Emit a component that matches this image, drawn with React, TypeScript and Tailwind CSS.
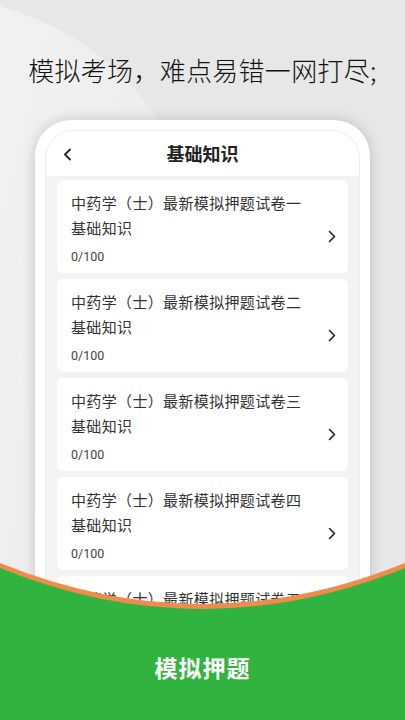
import React from "react";

const Chevron = ({ className = "" }: { className?: string }) => (
  <svg width="8" height="13" viewBox="0 0 8 13" className={className} fill="none">
    <path d="M1.5 1.5 L6.5 6.5 L1.5 11.5" stroke="#222" strokeWidth="1.6" strokeLinecap="round" strokeLinejoin="round" />
  </svg>
);

const items = ["一", "二", "三", "四", "五"];

export default function App() {
  return (
    <div
      className="relative h-[720px] w-[405px] overflow-hidden bg-[#e7e7e7]"
      style={{ fontFamily: '"Noto Sans CJK SC", "Noto Sans", sans-serif' }}
    >
      <svg className="absolute left-0 top-0" width="405" height="720" viewBox="0 0 405 720">
        <defs>
          <linearGradient id="bg" x1="0" y1="0" x2="1" y2="1">
            <stop offset="0" stopColor="#f1f1f1" />
            <stop offset="1" stopColor="#ebebeb" />
          </linearGradient>
        </defs>
        <path d="M0 6 Q115 40 170 140 L170 720 L0 720 Z" fill="url(#bg)" />
      </svg>

      <div className="relative flex flex-col items-center">
        <h1 className="mt-[51px] text-[26px] font-light leading-[38px] text-[#111] tracking-[0.3px]">
          模拟考场，难点易错一网打尽;
        </h1>

        <div className="mt-[31px] w-[335px] rounded-[36px] bg-white p-[10px] shadow-[0_0_14px_rgba(0,0,0,0.18)]">
          <div className="h-[600px] overflow-hidden rounded-t-[28px] border border-[#ececec] bg-[#f3f3f3]">
            <div className="relative flex h-[45px] items-center justify-center bg-white">
              <svg className="absolute left-[17px] top-[17px]" width="9" height="13" viewBox="0 0 9 13" fill="none">
                <path d="M7 1.5 L2 6.5 L7 11.5" stroke="#222" strokeWidth="1.8" strokeLinecap="round" strokeLinejoin="round" />
              </svg>
              <span className="text-[18px] font-bold text-[#222]">基础知识</span>
            </div>
            <div className="flex flex-col gap-[6px] px-[11px] pt-[4px]">
              {items.map((n) => (
                <div key={n} className="flex items-center rounded-[6px] bg-white pl-[14px] pr-[12px] pt-[10px] pb-[6px]">
                  <div className="flex-1">
                    <div className="text-[15px] leading-[25px] tracking-[0.35px] text-[#333]">
                      中药学（士）最新模拟押题试卷{n}
                    </div>
                    <div className="text-[15px] leading-[25px] tracking-[0.35px] text-[#333]">基础知识</div>
                    <div
                      className="mt-[7px] text-[12.5px] leading-[20px] text-[#444]"
                      style={{ fontFamily: 'Roboto, "Noto Sans", sans-serif' }}
                    >
                      0/100
                    </div>
                  </div>
                  <Chevron className="mt-[15px]" />
                </div>
              ))}
            </div>
          </div>
        </div>
      </div>

      <div className="absolute bottom-0 left-0 h-[160px] w-[405px]">
        <svg className="absolute left-0 top-0" width="405" height="160" viewBox="0 0 405 160">
          <path d="M0 3 Q202 85 405 3 L405 160 L0 160 Z" fill="#f08b4c" />
          <path d="M0 8 Q202 90 405 8 L405 160 L0 160 Z" fill="#31b43f" />
        </svg>
        <div className="absolute left-0 top-[92px] flex w-full justify-center">
          <span className="text-[23px] font-bold leading-[30px] tracking-[1px] text-white">模拟押题</span>
        </div>
      </div>
    </div>
  );
}
